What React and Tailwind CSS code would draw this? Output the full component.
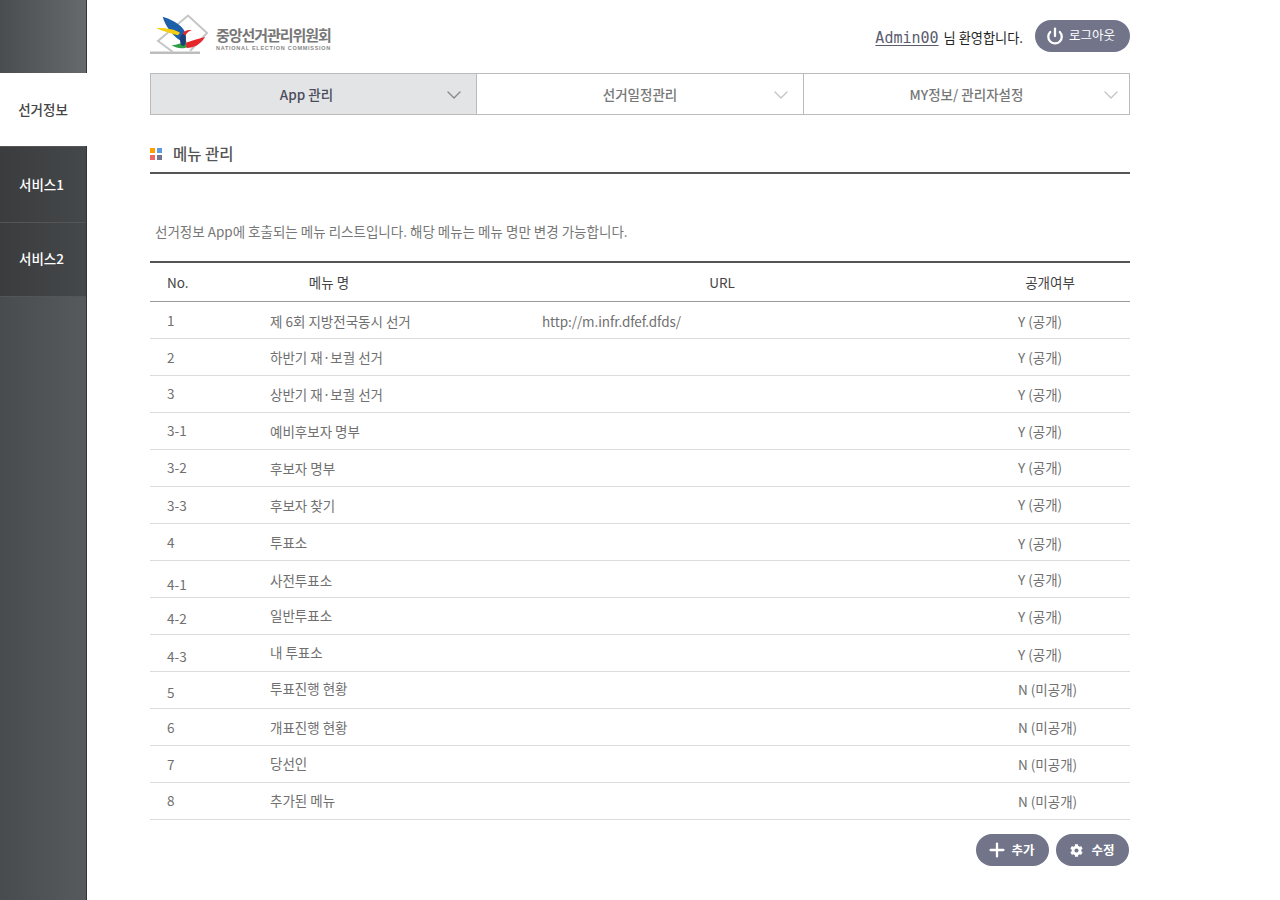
import React from 'react';
import { ChevronDown, Plus, Power } from 'lucide-react';
import { FaCog } from 'react-icons/fa';

const shift = {
  '-1': 'pb-[2px]',
  0: '',
  1: 'pt-[2px]',
  2: 'pt-[4px]',
  3: 'pt-[6px]',
  4: 'pt-[8px]',
  6: 'pt-[12px]',
};

const rows = [
  ['1', '제 6회 지방전국동시 선거', 'http://m.infr.dfef.dfds/', 'Y (공개)', 1, 2, 2],
  ['2', '하반기 재·보궐 선거', '', 'Y (공개)', 1, 1, 1],
  ['3', '상반기 재·보궐 선거', '', 'Y (공개)', 0, 1, 1],
  ['3-1', '예비후보자 명부', '', 'Y (공개)', 0, 1, 1],
  ['3-2', '후보자 명부', '', 'Y (공개)', 0, 1, 0],
  ['3-3', '후보자 찾기', '', 'Y (공개)', 1, 1, 0],
  ['4', '투표소', '', 'Y (공개)', 1, 1, 2],
  ['4-1', '사전투표소', '', 'Y (공개)', 6, 2, 1],
  ['4-2', '일반투표소', '', 'Y (공개)', 3, 0, 1],
  ['4-3', '내 투표소', '', 'Y (공개)', 4, 0, 2],
  ['5', '투표진행 현황', '', 'N (미공개)', 3, -1, 0],
  ['6', '개표진행 현황', '', 'N (미공개)', 1, 1, 1],
  ['7', '당선인', '', 'N (미공개)', 1, 0, 1],
  ['8', '추가된 메뉴', '', 'N (미공개)', 0, 0, 1],
];

function Logo() {
  return (
    <svg width="58" height="42" viewBox="0 0 58 42" className="shrink-0">
      <path d="M0 39.7H50" stroke="#bdbdbd" strokeWidth="2.4" />
      <path d="M23 39L8 28L38 2.5L57 20L40 38" stroke="#c6c6c6" strokeWidth="2" fill="none" />
      <path d="M12.7 3.7C20 5.7 30 11 33 15.7C36 20 37 24 35 27.3L30 27.3C24 24 15 13 12.7 3.7Z" fill="#1d5fa8" />
      <path d="M6 15C14 14.5 25 16 30 19.7L28 22.3C23 21 12 18 6 15Z" fill="#f5cf12" />
      <path d="M21.7 32.3C27 32 32 30 36 27.3L37.3 34C34 36 27 36 21.7 32.3Z" fill="#2f9e44" />
      <path d="M55 24C49 26 43 27 36 29.7L36.7 35C44 35 51 31 55 24Z" fill="#e5262b" />
      <path d="M32.7 20.7C34 18 38 16.5 41.7 17.3C39 18 37 19.5 35 23Z" fill="#e5262b" />
      <ellipse cx="33" cy="27" rx="3" ry="6" fill="#1f3f7a" />
    </svg>
  );
}

function Tab({ label, active, last }) {
  return (
    <div className={`relative flex items-center justify-center h-full pt-[1px] ${active ? 'bg-[#e3e4e6] text-[#4b4d5b] pr-[14px]' : 'text-[#777]'} ${last ? '' : 'border-r border-[#bbb]'}`}>
      <span className="text-[13.5px] font-medium">{label}</span>
      <ChevronDown className={`absolute top-[9px] ${last ? 'right-[6px]' : 'right-[10px]'} ${active ? 'text-[#888]' : 'text-[#c4c4c4]'}`} size={24} strokeWidth={1.4} />
    </div>
  );
}

function SideItem({ label, active, cls }) {
  return (
    <div className={`flex items-center justify-center font-medium text-[13.5px] ${cls} ${active ? 'bg-white text-[#444]' : 'text-white border-t border-[#555] bg-[linear-gradient(90deg,#3a3c3e,#45484a)]'}`}>
      <span className={active ? 'pr-[1px]' : 'pr-[3px]'}>{label}</span>
    </div>
  );
}

function Pill({ children, cls }) {
  return <div className={`flex items-center justify-center rounded-full bg-[#72758a] text-white h-8 ${cls}`}>{children}</div>;
}

export default function App() {
  return (
    <div className="flex w-[1280px] h-[900px] bg-white overflow-hidden text-[13.5px] text-[#707070]" style={{ fontFamily: '"Noto Sans CJK KR", "Noto Sans", sans-serif' }}>
      <aside className="flex flex-col w-[87px] shrink-0 border-r border-[#333] bg-[linear-gradient(90deg,#484c4e,#565a5c)]">
        <div className="h-[73px] bg-[linear-gradient(90deg,#4a4d4f,#666a6c)]" />
        <SideItem label="선거정보" active cls="h-[73px] mr-[-1px] relative" />
        <SideItem label="서비스1" cls="h-[76px] pb-[1px]" />
        <SideItem label="서비스2" cls="h-[75px] border-b border-[#333] pb-[2px]" />
      </aside>

      <main className="flex flex-col w-[980px] ml-[63px]">
        <header className="flex items-center justify-between h-[73px]">
          <div className="flex items-center pb-[5px]">
            <Logo />
            <div className="flex flex-col ml-[8px] pt-[10px]">
              <span className="text-[15px] leading-[18px] font-bold text-[#777] tracking-[-1.05px]">중앙선거관리위원회</span>
              <span className="text-[5.5px] leading-[8px] font-bold text-[#888] tracking-[0.72px]" style={{ fontFamily: '"Liberation Sans", sans-serif' }}>NATIONAL ELECTION COMMISSION</span>
            </div>
          </div>
          <div className="flex items-center pb-[2px]">
            <div className="flex items-center pt-[5px]">
              <span className="text-[15px] text-[#5a5c6e] underline underline-offset-2" style={{ fontFamily: '"DejaVu Sans Mono", monospace' }}>Admin00</span>
              <span className="ml-[5px] text-[13.2px] text-[#222]">님 환영합니다.</span>
            </div>
            <Pill cls="w-[95px] ml-[12px] pr-[4px]">
              <Power size={18} strokeWidth={3} />
              <span className="ml-[5px] text-[12.5px]">로그아웃</span>
            </Pill>
          </div>
        </header>

        <nav className="grid grid-cols-[326px_327px_325px] h-[42px] border border-[#bbb]">
          <Tab label="App 관리" active />
          <Tab label="선거일정관리" />
          <Tab label="MY정보/ 관리자설정" last />
        </nav>

        <div className="flex items-center h-[59px] border-b-2 border-[#555] pt-[23px] pb-[3px]">
          <div className="grid grid-cols-2 gap-[2px] w-[12px] h-[12px]">
            <i className="bg-[#ffa000]" /><i className="bg-[#5b9be0]" />
            <i className="bg-[#ee6666]" /><i className="bg-[#71758f]" />
          </div>
          <h1 className="ml-[11px] text-[15.5px] font-medium text-[#555]">메뉴 관리</h1>
        </div>

        <p className="pl-[5px] pt-[47px] h-[87px] text-[#777] leading-[20px]">선거정보 App에 호출되는 메뉴 리스트입니다. 해당 메뉴는 메뉴 명만 변경 가능합니다.</p>

        <div className="grid grid-cols-[34px_290px_496px_160px] h-[41px] items-center border-t-2 border-b border-t-[#555] border-b-[#999] text-[#444]">
          <span className="pl-[17px] whitespace-nowrap">No.</span>
          <span className="text-center">메뉴 명</span>
          <span className="text-center">URL</span>
          <span className="text-center">공개여부</span>
        </div>

        {rows.map(([no, name, url, open, a, b, c]) => (
          <div key={no} className="grid grid-cols-[120px_272px_476px_112px] h-[37px] pb-[2px] items-center border-b border-[#ddd]">
            <span className={`pl-[17px] ${shift[a]}`}>{no}</span>
            <span className={shift[b]}>{name}</span>
            <span className={`tracking-[-0.1px] ${shift[b]}`}>{url}</span>
            <span className={shift[c]}>{open}</span>
          </div>
        ))}

        <div className="flex justify-end gap-[7px] pt-[14px] pr-[1px]">
          <Pill cls="w-[73px] font-bold text-[12.5px] pr-[4px]">
            <Plus size={22} strokeWidth={2.5} />
            <span className="ml-[3px]">추가</span>
          </Pill>
          <Pill cls="w-[73px] font-bold text-[12.5px]">
            <FaCog size={13} />
            <span className="ml-[8px]">수정</span>
          </Pill>
        </div>
      </main>
    </div>
  );
}
